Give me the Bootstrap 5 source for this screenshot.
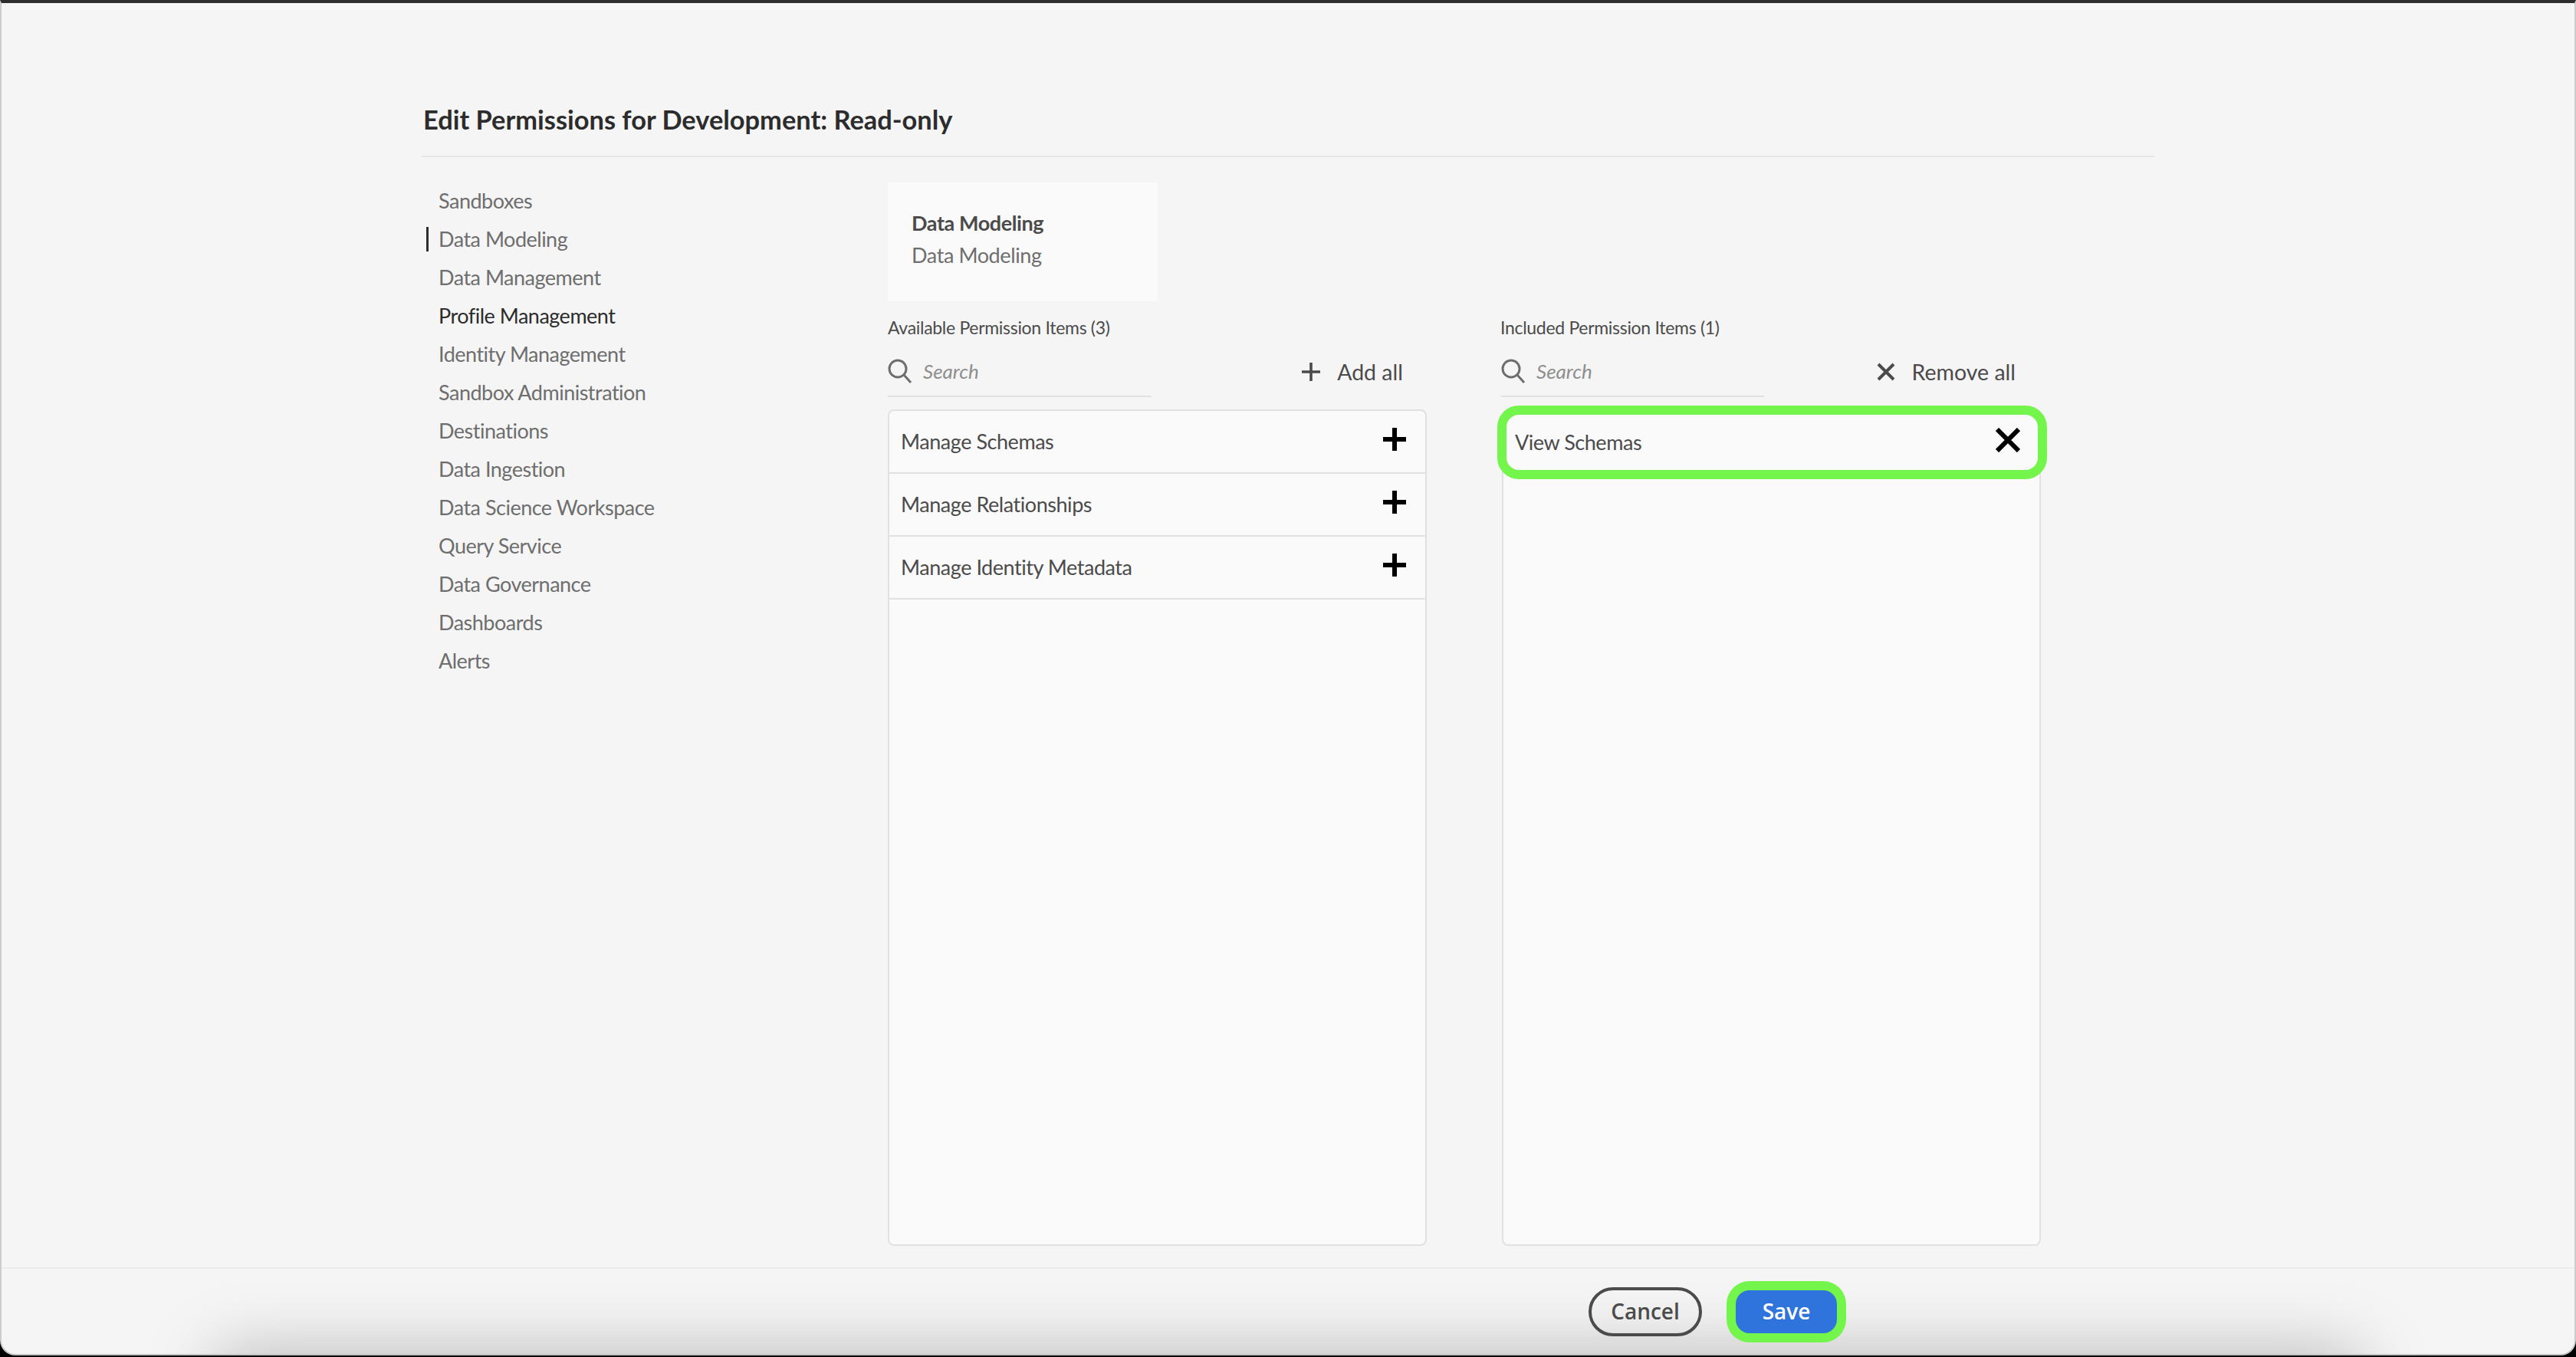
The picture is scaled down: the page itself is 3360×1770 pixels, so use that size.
<!DOCTYPE html>
<html lang="en">
<head>
  <meta charset="UTF-8">
  <title>Edit Permissions</title>
  <link href="https://cdn.jsdelivr.net/npm/bootstrap@5.3.0/dist/css/bootstrap.min.css" rel="stylesheet">
  <style>
    html, body { height: 100%; background: #000; }
    body { font-family: Lato, "Liberation Sans", sans-serif; overflow: hidden; }
    .app-window {
      height: 1768px; background: #f5f5f5; overflow: hidden;
      border-top: 4px solid #2e2e2e; border-left: 2px solid #ccc; border-right: 2px solid #ccc; border-bottom: 2px solid #c4c4c4;
      border-radius: 0 0 20px 20px;
    }
    .perm-main { padding: 132px 548px 28px; min-height: 0; }
    .perm-title { font-size: 34.4px; line-height: 40px; font-weight: 700; color: #2c2c2c; padding: 0 0 27px 2px; margin: 0 0 33px; border-bottom: 2px solid #e6e6e6; }
    .side-nav { width: 608px; margin-top: -1px; }
    .side-link { font-size: 27px; line-height: 32px; letter-spacing: -.5px; color: #6e6e6e; margin: 9px 0 9px 6px; padding-left: 13px; border-left: 3px solid transparent; }
    .side-link.is-current { border-left-color: #2c2c2c; }
    .side-link.is-hover { color: #2c2c2c; }
    .group-card { width: 352px; height: 155px; background: #fafafa; padding: 32px 31px; font-size: 27px; line-height: 42px; letter-spacing: -.4px; color: #6e6e6e; }
    .group-card strong { color: #4b4b4b; display: block; }
    .perm-cols { gap: 98px; margin-top: 19px; min-height: 0; }
    .perm-col { width: 703px; }
    .perm-label { font-size: 23px; line-height: 30px; letter-spacing: -.3px; color: #4b4b4b; }
    .perm-tools { height: 66px; margin-top: 10px; margin-bottom: 16px; }
    .search-box { width: 343px; height: 66px; border-bottom: 2px solid #e1e1e1; gap: 14px; margin: 0; }
    .search-box svg { margin-top: 2px; }
    .search-box input { border: 0; background: transparent; outline: 0; padding: 0; font-size: 26px; width: 280px; font-style: italic; }
    .search-box input::placeholder { color: #8e8e8e; }
    .bulk-action { font-size: 28.5px; color: #4b4b4b; gap: 22px; padding-right: 31px; }
    .perm-box { background: #fafafa; border: 2px solid #e1e1e1; border-radius: 8px; min-height: 0; }
    .perm-row { height: 82px; padding: 0 15px; font-size: 27px; letter-spacing: -.45px; color: #4b4b4b; border-bottom: 2px solid #e1e1e1; position: relative; }
    .perm-row-plain { border-bottom: 0; }
    .perm-row svg { margin: -6px 10px 0 0; }
    .green-ring { position: absolute; top: -7px; left: -8px; right: -10px; bottom: -7px; border: 12px solid #74f54b; border-radius: 28px; }
    .col-included .perm-label { margin-left: -2px; }
    .col-included .search-box { margin-left: -1px; }
    .col-included .bulk-action { padding-right: 33px; }
    .perm-foot { height: 113px; border-top: 2px solid #eaeaea; padding-right: 962px; gap: 44px; position: relative; }
    .foot-shade { position: absolute; left: 280px; right: 280px; bottom: -200px; height: 200px; box-shadow: 0 0 90px 0 rgba(0,0,0,.26); }
    .btn-cancel, .btn-save { position: relative; font-family: "Open Sans", sans-serif; font-weight: 600; font-size: 28px; line-height: 1; padding: 0 0 2px; }
    .btn-cancel { width: 148px; height: 64px; border: 4px solid #4b4b4b; border-radius: 32px; color: #4b4b4b; }
    .btn-save { width: 132px; height: 56px; background: #2f73dc; color: #fff; border: 0; border-radius: 18px; box-shadow: 0 0 0 12px #74f54b; }
  </style>
</head>
<body>
  <div class="app-window d-flex flex-column">
    <div class="perm-main flex-grow-1 d-flex flex-column">
      <h1 class="perm-title">Edit Permissions for Development: Read-only</h1>
      <div class="d-flex flex-grow-1" style="min-height:0">
        <nav class="side-nav nav flex-column flex-nowrap">
          <div class="side-link">Sandboxes</div>
          <div class="side-link is-current">Data Modeling</div>
          <div class="side-link">Data Management</div>
          <div class="side-link is-hover">Profile Management</div>
          <div class="side-link">Identity Management</div>
          <div class="side-link">Sandbox Administration</div>
          <div class="side-link">Destinations</div>
          <div class="side-link">Data Ingestion</div>
          <div class="side-link">Data Science Workspace</div>
          <div class="side-link">Query Service</div>
          <div class="side-link">Data Governance</div>
          <div class="side-link">Dashboards</div>
          <div class="side-link">Alerts</div>
        </nav>
        <div class="d-flex flex-column flex-grow-1">
          <div class="group-card"><strong>Data Modeling</strong>Data Modeling</div>
          <div class="perm-cols d-flex flex-grow-1">
            <section class="perm-col d-flex flex-column">
              <div class="perm-label">Available Permission Items (3)</div>
              <div class="perm-tools d-flex justify-content-between align-items-center">
                <label class="search-box d-flex align-items-center">
                  <svg width="32" height="34" viewBox="0 0 32 34" fill="none" stroke="#6e6e6e" stroke-width="3"><circle cx="13" cy="13" r="11"/><path d="M21 21l9 10"/></svg>
                  <input type="text" placeholder="Search">
                </label>
                <div class="bulk-action d-flex align-items-center">
                  <svg width="24" height="24" viewBox="0 0 24 24" stroke="#4b4b4b" stroke-width="3.6"><path d="M12 0v24M0 12h24"/></svg>
                  <span>Add all</span>
                </div>
              </div>
              <div class="perm-box flex-grow-1">
                <div class="perm-row d-flex justify-content-between align-items-center"><span>Manage Schemas</span>
                  <svg width="30" height="30" viewBox="0 0 30 30" stroke="#000" stroke-width="6"><path d="M15 0v30M0 15h30"/></svg></div>
                <div class="perm-row d-flex justify-content-between align-items-center"><span>Manage Relationships</span>
                  <svg width="30" height="30" viewBox="0 0 30 30" stroke="#000" stroke-width="6"><path d="M15 0v30M0 15h30"/></svg></div>
                <div class="perm-row d-flex justify-content-between align-items-center"><span>Manage Identity Metadata</span>
                  <svg width="30" height="30" viewBox="0 0 30 30" stroke="#000" stroke-width="6"><path d="M15 0v30M0 15h30"/></svg></div>
              </div>
            </section>
            <section class="perm-col col-included d-flex flex-column">
              <div class="perm-label">Included Permission Items (1)</div>
              <div class="perm-tools d-flex justify-content-between align-items-center">
                <label class="search-box d-flex align-items-center">
                  <svg width="32" height="34" viewBox="0 0 32 34" fill="none" stroke="#6e6e6e" stroke-width="3"><circle cx="13" cy="13" r="11"/><path d="M21 21l9 10"/></svg>
                  <input type="text" placeholder="Search">
                </label>
                <div class="bulk-action d-flex align-items-center">
                  <svg width="24" height="24" viewBox="0 0 24 24" stroke="#4b4b4b" stroke-width="4"><path d="M2 2l20 20M22 2L2 22"/></svg>
                  <span>Remove all</span>
                </div>
              </div>
              <div class="perm-box flex-grow-1">
                <div class="perm-row perm-row-plain d-flex justify-content-between align-items-center"><span>View Schemas</span>
                  <svg width="32" height="32" viewBox="0 0 32 32" stroke="#000" stroke-width="6"><path d="M2 2l28 28M30 2L2 30"/></svg>
                  <span class="green-ring"></span></div>
              </div>
            </section>
          </div>
        </div>
      </div>
    </div>
    <footer class="perm-foot d-flex justify-content-end align-items-center">
      <span class="foot-shade"></span>
      <button type="button" class="btn btn-cancel">Cancel</button>
      <button type="button" class="btn btn-save">Save</button>
    </footer>
  </div>
  <script src="https://cdn.jsdelivr.net/npm/bootstrap@5.3.0/dist/js/bootstrap.bundle.min.js"></script>
</body>
</html>
